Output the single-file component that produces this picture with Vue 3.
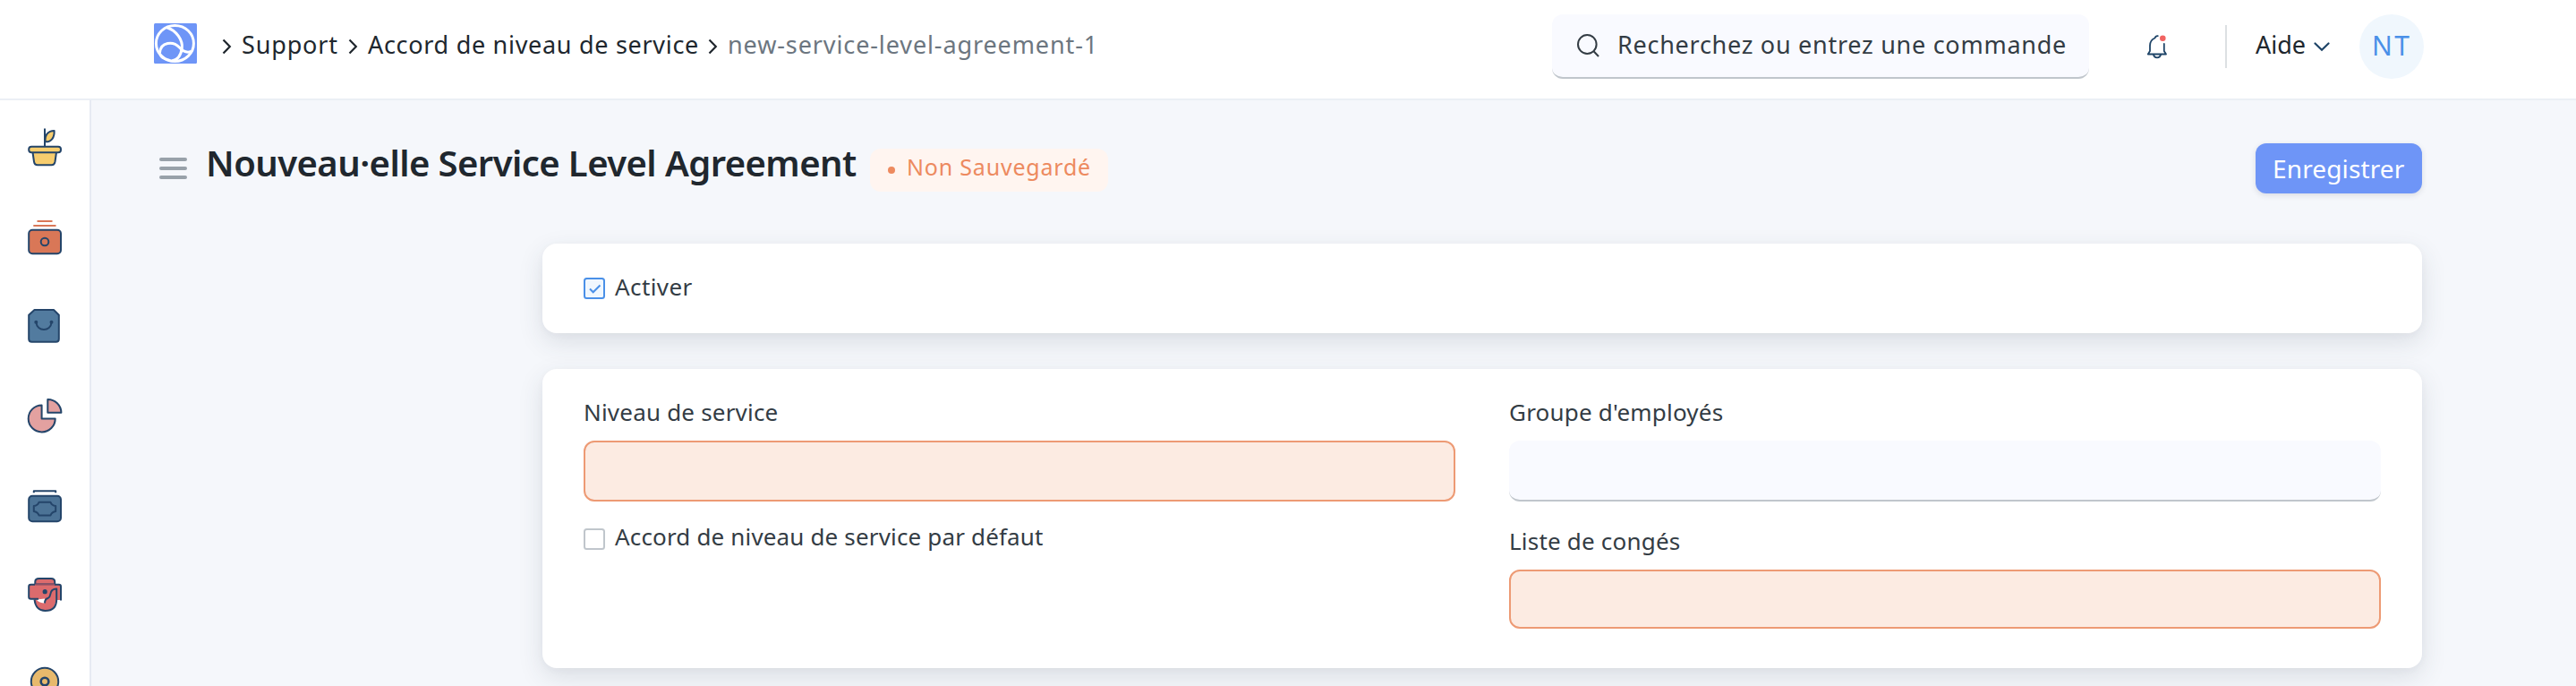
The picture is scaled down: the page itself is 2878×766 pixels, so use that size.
<script setup>
import { ref } from 'vue'

const enabled = ref(true)
const isDefault = ref(false)
</script>

<template>
  <div class="app">
    <header class="navbar">
      <a class="logo">
        <svg width="48" height="45" viewBox="0 0 48 45" fill="none" stroke="#fff" stroke-width="3">
          <rect width="48" height="45" rx="1.5" fill="#6e95f7" stroke="none" />
          <ellipse cx="23.4" cy="22.4" rx="21" ry="20" />
          <path d="M14.5 4.8C25 8 32.500 19 31.300 28C30 36 27 41 20 42" />
          <path d="M6.500 33C7.500 20.500 21.500 19.500 28.500 27C32 31 36 33.500 41.500 31.500" />
          <path d="M6.300 31.500C6 38 11 41 18 41.200" stroke-width="2.200" />
        </svg>
      </a>
      <nav class="crumbs">
        <svg class="chev" width="12" height="18" viewBox="0 0 12 18"><path d="M1.500 1.500L8.800 9L1.500 16.500" /></svg>
        <span class="crumb c-support">Support</span>
        <svg class="chev" width="12" height="18" viewBox="0 0 12 18"><path d="M1.500 1.500L8.800 9L1.500 16.500" /></svg>
        <span class="crumb c-sla">Accord de niveau de service</span>
        <svg class="chev" width="12" height="18" viewBox="0 0 12 18"><path d="M1.500 1.500L8.800 9L1.500 16.500" /></svg>
        <span class="crumb c-doc">new-service-level-agreement-1</span>
      </nav>
      <div class="search">
        <svg width="26" height="28" viewBox="0 0 26 28" fill="none" stroke="#333c44" stroke-width="2">
          <ellipse cx="12.300" cy="12.500" rx="10.300" ry="10.500" />
          <path d="M19.500 20.200L25 26" />
        </svg>
        <span>Recherchez ou entrez une commande</span>
      </div>
      <svg class="bell" width="24" height="28" viewBox="0 0 24 28" fill="none" stroke="#1f4568" stroke-width="1.800" stroke-linecap="round" stroke-linejoin="round">
        <path d="M12.800 2.200C10.500 2 10 3 9.500 4.500C5.800 6 4 9 4 13V19L1.800 22.500H22L19.800 19V11" />
        <path d="M8 23C8.500 25.500 10 26.300 12 26.300S15.500 25.500 16 23" />
        <circle cx="18.300" cy="4.800" r="3.300" fill="#f16361" stroke="none" />
      </svg>
      <i class="divider"></i>
      <span class="help">Aide</span>
      <svg class="down" width="18" height="11" viewBox="0 0 18 11"><path d="M1.500 1.500L9 8.800L16.500 1.500" /></svg>
      <div class="avatar">NT</div>
    </header>

    <div class="body">
      <aside class="sidebar">
        <svg class="module" viewBox="0 0 40 40">
          <path d="M6.500 26L8 36.500Q8.600 40.200 12 40.200H27.500Q30.800 40.200 31.500 36.500L33 26" fill="#f7cd6e" />
          <rect x="2.200" y="19.800" width="35.800" height="6.400" rx="3" fill="#f7cd6e" />
          <path d="M20.700 14.300C19.800 7 23.500 2 30.600 2C31 9.500 27.500 14.600 20.700 14.300Z" fill="#f7cd6e" />
          <path d="M20 -0.500V20" />
        </svg>
        <svg class="module" viewBox="0 0 40 40">
          <path d="M11.500 3H28.500M7.300 8H32.500" stroke="#d97757" />
          <rect x="2.200" y="12.700" width="35.800" height="26.500" rx="4" fill="#d97757" />
          <circle cx="20" cy="26" r="4.300" />
        </svg>
        <svg class="module" viewBox="0 0 40 40">
          <path d="M8.500 2H30L35.800 7.700V34.500Q35.800 37.800 32.500 37.800H5.500Q2.200 37.800 2.200 34.500V7.700Z" fill="#527b9f" />
          <path d="M10.500 16C11 26.500 27 26.500 27.500 16" />
          <circle cx="10.300" cy="15.800" r="1" /><circle cx="27.500" cy="15.800" r="1" />
        </svg>
        <svg class="module" viewBox="0 0 40 40">
          <path d="M16.600 8.400A15 15 0 1 0 31.700 23.400H16.600Z" fill="#e3a1a0" />
          <path d="M23.300 2V16.800H38.400A15 15 0 0 0 23.300 2Z" fill="#e3a1a0" />
        </svg>
        <svg class="module" viewBox="0 0 40 40">
          <path d="M7.800 6.200V4.200H32.200V6.200" />
          <rect x="2.200" y="9.800" width="35.800" height="28.400" rx="4" fill="#4c7396" />
          <path d="M13.500 16.800H26.500Q28 20.500 32.200 21V27Q28 27.500 26.500 31.400H13.500Q12 27.500 7.800 27V21Q12 20.500 13.500 16.800Z" />
        </svg>
        <svg class="module" viewBox="0 0 40 40">
          <path d="M9.300 8.500V5.500Q9.300 2 13.500 2H27Q31.200 2 31.200 5.500V8.500Z" fill="#dc6b6d" />
          <path d="M2.200 8.800H38V26H33V24V12H33V24Q31.500 38 20.500 38Q10 38 8.500 25H2.200Z" fill="#dc6b6d" stroke="none" />
          <path d="M10.500 25.500L20 24.500V29.500Q14 29.500 10.500 25.500Z" fill="#fff" stroke="none" />
          <path d="M13 24.800H4.500Q2.200 24.800 2.200 22.500V11Q2.200 8.800 4.500 8.800H9M31 8.800H35.800Q38 8.800 38 11V26.500" />
          <path d="M8.500 25.500Q10 38 20.500 38Q33.200 38 33.200 25V13.500Q27 13.500 26.300 19.500Q26 22.500 23.500 24Q20 25 20 29.500" />
          <path d="M9.300 8.600H31" stroke="#8c5065" />
          <circle cx="20.200" cy="16.700" r="1.600" fill="#24456a" />
        </svg>
        <svg class="module" viewBox="0 0 40 40">
          <circle cx="20" cy="17" r="15.200" fill="#e7b96c" />
          <circle cx="20" cy="17" r="4.300" stroke-width="2.600" />
        </svg>
      </aside>

      <main class="page">
        <div class="page-head">
          <svg class="burger" width="31" height="26" viewBox="0 0 31 26"><path d="M2 3H29M2 13H29M2 23H29" /></svg>
          <h1>Nouveau·elle Service Level Agreement</h1>
          <span class="status"><i></i><span>Non Sauvegardé</span></span>
          <button class="save">Enregistrer</button>
        </div>

        <section class="card enable">
          <label class="check c-enable">
            <svg width="24" height="24" viewBox="0 0 24 24">
              <rect x="1" y="1" width="22" height="22" rx="2.500" :fill="enabled ? '#f0f7fe' : '#fff'" :stroke="enabled ? '#4a90e8' : '#c0c6cc'" />
              <path v-if="enabled" d="M7 12.500L10.700 16.300L18.500 8.500" stroke="#4a90e8" />
            </svg>
            <span>Activer</span>
          </label>
        </section>

        <section class="card details">
          <div class="col">
            <div class="label">Niveau de service</div>
            <div class="input required"></div>
            <label class="check c-default">
              <svg width="24" height="24" viewBox="0 0 24 24">
                <rect x="1" y="1" width="22" height="22" rx="2.500" :fill="isDefault ? '#f0f7fe' : '#fff'" :stroke="isDefault ? '#4a90e8' : '#c0c6cc'" />
                <path v-if="isDefault" d="M7 12.500L10.700 16.300L18.500 8.500" stroke="#4a90e8" />
              </svg>
              <span>Accord de niveau de service par défaut</span>
            </label>
          </div>
          <div class="col">
            <div class="label">Groupe d'employés</div>
            <div class="input"></div>
            <div class="label second">Liste de congés</div>
            <div class="input required short"></div>
          </div>
        </section>
      </main>
    </div>
  </div>
</template>

<style>
body { margin: 0; background: #f5f7fb; }
</style>

<style scoped>
.app {
  height: 766px;
  overflow: hidden;
  display: flex;
  flex-direction: column;
  font-family: "Noto Sans", "Open Sans", sans-serif;
  color: #333c44;
  background: #f5f7fb;
}
.app * { box-sizing: border-box; }
span, h1, .label { white-space: nowrap; }
svg { flex: none; display: block; }

.navbar {
  flex: none;
  height: 112px;
  display: flex;
  align-items: center;
  padding: 0 170px 6px 172px;
  background: #fff;
  border-bottom: 2px solid #ebeff5;
}
.logo { width: 76px; padding-bottom: 7px; }
.crumbs { display: flex; align-items: center; flex: 1; }
.chev { fill: none; stroke: #20272e; stroke-width: 2.200; }
.crumb {
  font-size: 27px;
  line-height: 40px;
  color: #20272e;
  padding-left: 10px;
  margin-bottom: 4px;
}
.c-support { width: 129px; letter-spacing: 0.85px; }
.c-sla { width: 390px; padding-left: 10px; letter-spacing: 0.7px; }
.c-doc { color: #6c7680; letter-spacing: 0.89px; }
.search {
  width: 600px;
  height: 72px;
  border-radius: 12px;
  background: #f9faff;
  border-bottom: 2px solid #c0c6cc;
  display: flex;
  align-items: center;
  padding-left: 27px;
  gap: 20px;
  font-size: 27px;
  letter-spacing: 0.73px;
}
.search span { padding-bottom: 3px; line-height: 38px; }
.bell { margin-left: 64px; }
.divider { width: 2px; height: 48px; background: #dce0e3; margin-left: 64px; }
.help { margin-left: 32px; width: 65px; font-size: 27px; line-height: 40px; color: #20272e; margin-bottom: 4px; }
.down { fill: none; stroke: #1f4568; stroke-width: 2.200; stroke-linecap: round; }
.avatar {
  margin-left: 33px;
  width: 72px;
  height: 72px;
  border-radius: 50%;
  background: #f0f7fd;
  color: #4a90e8;
  font-size: 30px;
  letter-spacing: 2.5px;
  line-height: 70px;
  padding-left: 14px;
}

.body { flex: 1; min-height: 0; display: flex; }
.sidebar {
  flex: none;
  width: 102px;
  background: #fff;
  border-right: 2px solid #e6eaf2;
  padding: 32px 0 0 30px;
  display: flex;
  flex-direction: column;
  gap: 60px;
  overflow: hidden;
}
.module {
  width: 40px;
  height: 40px;
  overflow: visible;
  fill: none;
  stroke: #24456a;
  stroke-width: 2;
  stroke-linejoin: round;
}

.page { flex: 1; padding: 0 172px 0 76px; }
.page-head { display: flex; align-items: flex-start; height: 160px; padding-top: 48px; }
.burger { margin-top: 15px; fill: none; stroke: #98a1a9; stroke-width: 4; stroke-linecap: round; }
h1 {
  margin: -4px 0 0 21px;
  width: 742px;
  font-size: 40px;
  font-weight: 600;
  line-height: 52px;
  letter-spacing: -0.57px;
  color: #20272e;
}
.status {
  margin-top: 6px;
  width: 266px;
  height: 48px;
  border-radius: 12px;
  background: #fff5f0;
  color: #ed8a5f;
  font-size: 25px;
  letter-spacing: 0.8px;
  line-height: 41px;
  display: flex;
  padding-left: 20px;
}
.status i { width: 8px; height: 8px; border-radius: 50%; background: #ed8a5f; margin: 20px 13px 0 0; }
.save {
  margin-left: auto;
  width: 186px;
  height: 56px;
  border: 0;
  border-radius: 12px;
  background: #6e95f7;
  color: #fff;
  font: 28px/54px "Noto Sans", sans-serif;
  letter-spacing: 0.13px;
  padding: 0 0 0 19px;
  text-align: left;
  box-shadow: 0 2px 6px rgba(50, 60, 80, 0.14);
}

.card {
  margin-left: 428px;
  width: 2100px;
  border-radius: 16px;
  background: #fff;
  box-shadow: 0 10px 28px rgba(50, 65, 80, 0.13), 0 2px 8px rgba(50, 65, 80, 0.03);
}
.enable { height: 100px; padding: 38px 46px; }
.check { display: flex; gap: 11px; font-size: 26px; line-height: 36px; }
.check svg { fill: none; stroke-width: 2; }
.check span { margin-top: -9px; }
.check.c-enable span { margin-top: -8px; }
.c-enable { letter-spacing: 0.42px; }
.c-default { letter-spacing: 0.16px; margin-top: 30px; }
.details {
  margin-top: 40px;
  height: 334px;
  padding: 29px 46px 0;
  display: grid;
  grid-template-columns: 974px 974px;
  column-gap: 60px;
  align-items: start;
}
.label { font-size: 26px; line-height: 38px; height: 51px; letter-spacing: 0.2px; }
.second { margin-top: 25px; }
.input { height: 68px; border-radius: 12px; background: #f9faff; border-bottom: 2px solid #c0c6cc; }
.required { background: #fcebe2; border: 2px solid #ed9a74; }
.short { height: 66px; }
</style>
